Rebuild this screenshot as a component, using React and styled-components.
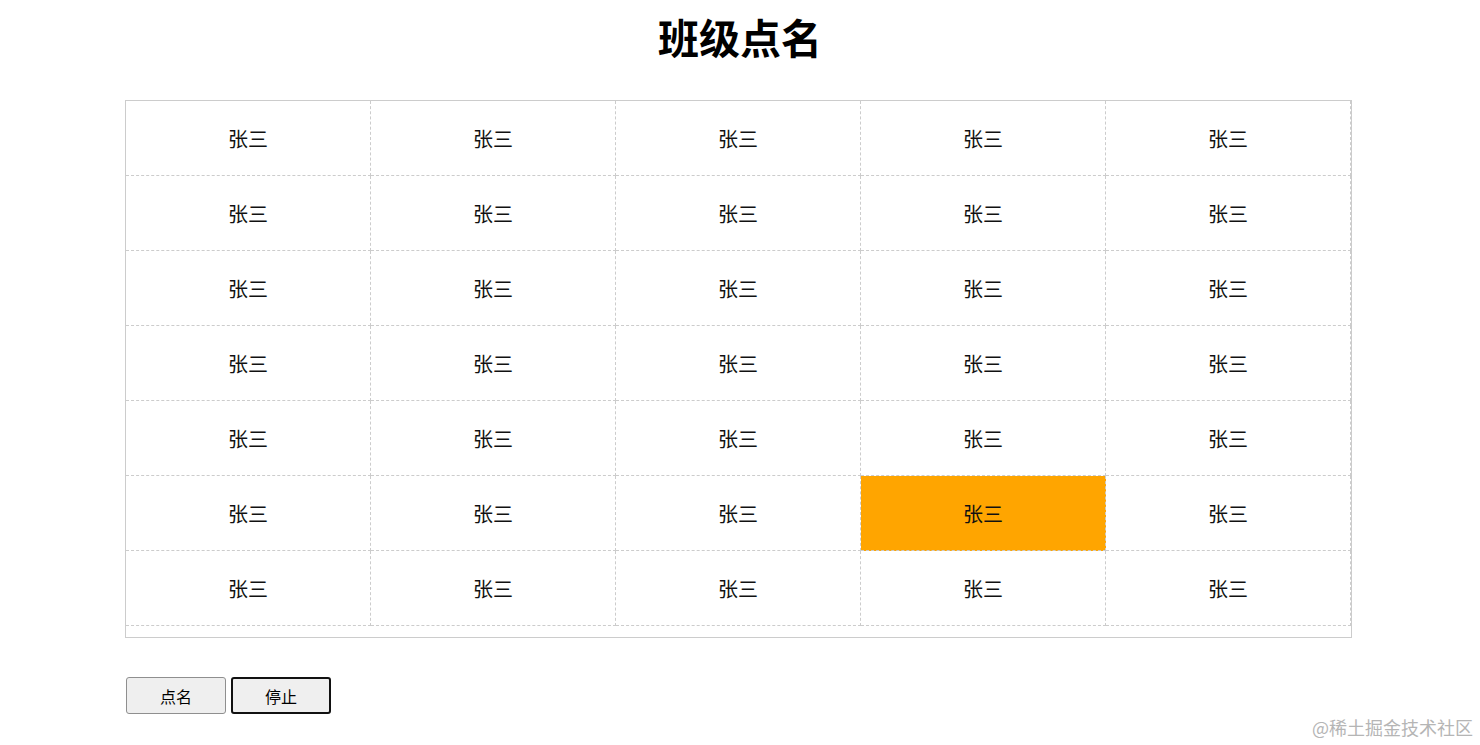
import React from 'react'
import styled, { createGlobalStyle } from 'styled-components'

const GlobalStyle = createGlobalStyle`
body{
  margin:0;
  background:#fff;
  font-family:"Noto Sans CJK SC","Noto Sans",sans-serif;
  color:#000;
}
`
const Page = styled.div`
width:1480px;
min-height:745px;
position:relative;
`
const Title = styled.h1`
margin:0 0 36px;
padding-top:8px;
height:56px;
line-height:56px;
font-size:41px;
font-weight:700;
text-align:center;
`
const Board = styled.div`
box-sizing:border-box;
width:1227px;
height:538px;
margin-left:125px;
border:1px solid #ccc;
overflow:hidden;
display:grid;
grid-template-columns:repeat(5,245px);
grid-auto-rows:75px;
align-content:start;
`
const Cell = styled.div`
box-sizing:border-box;
border-right:1px dashed #ccc;
border-bottom:1px dashed #ccc;
display:flex;
align-items:center;
justify-content:center;
font-size:20px;
color:#111;
background:${p => p.active ? '#ffa500' : 'transparent'};
`
const Actions = styled.div`
display:flex;
gap:5px;
margin:39px 0 0 126px;
`
const Button = styled.button`
box-sizing:border-box;
width:100px;
height:37px;
background:#efefef;
border:${p => p.focused ? '2px solid #111' : '1px solid #8f8f8f'};
border-radius:3px;
font-family:"Noto Sans CJK SC","Noto Sans",sans-serif;
font-size:16px;
color:#000;
padding:0;
`
const Watermark = styled.div`
position:absolute;
right:7px;
bottom:5px;
font-size:18px;
color:#b5b5b5;
font-family:"Noto Sans CJK SC",sans-serif;
`

const names = Array.from({ length: 35 }, () => '张三')

const App = () => {
  const current = 28
  return (
    <Page>
      <GlobalStyle />
      <Title>班级点名</Title>
      <Board>
        {names.map((n, i) => (
          <Cell key={i} active={i === current}>{n}</Cell>
        ))}
      </Board>
      <Actions>
        <Button>点名</Button>
        <Button focused>停止</Button>
      </Actions>
      <Watermark>@稀土掘金技术社区</Watermark>
    </Page>
  )
}

export default App
